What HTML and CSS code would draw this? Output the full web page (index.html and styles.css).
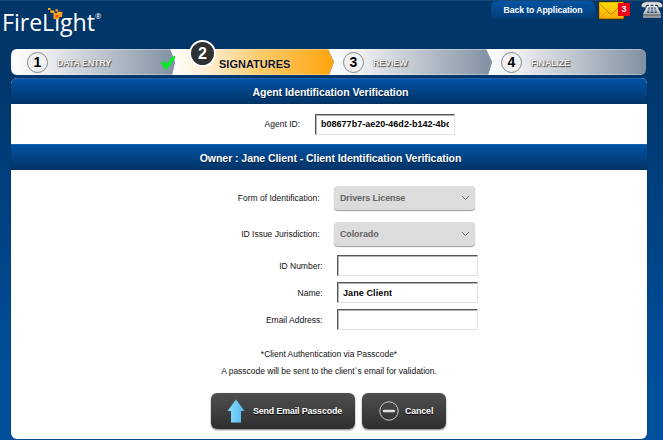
FILE: index.html
```html
<!DOCTYPE html>
<html lang="en">
<head>
<meta charset="utf-8">
<title>FireLight - Signatures</title>
<link rel="stylesheet" href="styles.css">
</head>
<body>
<header class="top">
  <div class="logo">
    <span class="logo-text">FireLight</span><span class="reg">®</span>
    <svg class="sparks" width="16" height="12" viewBox="0 0 16 12"><path fill="#f7a823" d="M1 0h2.500v2H1zM3 2.300l4.500.5v2.500l-4-.5zM8.500 1.200h2.300v2.300H8.500z"/><path fill="#f9a11f" d="M6.500 5h3.500l.5-1.500 5 .5-.5 5H12.500l-.5 2.500-5.500-.5z"/><path fill="#e84e1b" d="M8.500 7h3v2.500h-3z"/></svg>
  </div>
  <a class="back">Back to Application</a>
  <div class="mail">
    <svg width="28" height="21" viewBox="0 0 28 21"><defs><linearGradient id="g" x2="0" y2="1"><stop stop-color="#ffe000"/><stop offset="1" stop-color="#ffa90c"/></linearGradient></defs><rect x=".7" y=".7" width="25.500" height="17.500" rx="1" fill="url(#g)" stroke="#2b2410"/><path d="M2 3l9 9q2 2 4 0L24 3" fill="none" stroke="#c98500"/><path d="M2 16.500l7-6M17 10.500l7 6" stroke="#e79c00" stroke-width=".6"/></svg>
    <span class="badge">3</span>
  </div>
  <svg class="phone" width="22" height="18" viewBox="0 0 22 18"><defs><linearGradient id="p" x2="0" y2="1"><stop stop-color="#fff"/><stop offset="1" stop-color="#8b8f94"/></linearGradient></defs><path fill="#ddd" stroke="#555" stroke-width=".5" d="M.5 6Q0 1 6 .8h10Q22 1 21.500 6l-4 .5L16.500 4h-11L4.500 6.500z"/><path fill="url(#p)" d="M6 5h2V3h1.500v2h3V3H14v2h2l4 8v4H2v-4z"/><path fill="#244466" d="M7.500 6.500h7l1.500 5.500H6z"/><path stroke="#eee" stroke-width=".8" d="M9.500 6.500l-.6 5.500M12.500 6.500l.6 5.500M7 8.200h8M6.500 10h9"/><path stroke="#555" d="M2 14h18"/></svg>
</header>

<nav class="steps">
  <svg class="track" width="636" height="26" viewBox="0 0 636 26">
    <defs>
      <linearGradient id="s"><stop stop-color="#fdfdfe"/><stop offset=".2" stop-color="#edeff1"/><stop offset="1" stop-color="#8090a2"/></linearGradient>
      <linearGradient id="o"><stop stop-color="#fff"/><stop offset=".25" stop-color="#ffeccb"/><stop offset=".55" stop-color="#ffcb6b"/><stop offset="1" stop-color="#ffa40a"/></linearGradient>
    </defs>
    <path fill="url(#s)" d="M6 0h153l5 13-3 13H6Q0 26 0 19V7Q0 0 6 0z"/>
    <path fill="url(#o)" d="M159 0h158l6 13-5 13H161l3-13z"/>
    <path fill="url(#s)" d="M317 0h158l6 13-4 13H318l5-13z"/>
    <path fill="url(#s)" d="M475 0h154q6 0 6 6v14q0 6-6 6H477l4-13z"/>
    <path fill="none" stroke="#fff" stroke-opacity=".35" d="M5 .5h625M5 25.500h625"/>
  </svg>
  <div class="step first"><span class="num">1</span><span class="cap">DATA ENTRY</span>
    <svg class="check" width="16" height="15" viewBox="0 0 16 15"><path fill="#0bea28" d="M.5 7.500L4 6l2.500 3L12 2l3-1.500v3L7.500 14H5z"/></svg>
  </div>
  <div class="step active"><span class="num">2</span><span class="cap">SIGNATURES</span></div>
  <div class="step third"><span class="num">3</span><span class="cap">REVIEW</span></div>
  <div class="step fourth"><span class="num">4</span><span class="cap">FINALIZE</span></div>
</nav>

<main class="panel">
  <h2 class="bar"><span>Agent Identification Verification</span></h2>
  <div class="agent"><label class="agent-label">Agent ID:</label><div class="field"><span class="value agent-value">b08677b7-ae20-46d2-b142-4bd</span></div></div>
  <h2 class="bar"><span>Owner : Jane Client - Client Identification Verification</span></h2>
  <section class="form">
    <div class="row sel"><label>Form of Identification:</label><div class="select"><span>Drivers License</span><svg width="9" height="6" viewBox="0 0 9 6"><path d="M1 1l3.500 3.500L8 1" fill="none" stroke="#666"/></svg></div></div>
    <div class="row sel"><label>ID Issue Jurisdiction:</label><div class="select"><span>Colorado</span><svg width="9" height="6" viewBox="0 0 9 6"><path d="M1 1l3.500 3.500L8 1" fill="none" stroke="#666"/></svg></div></div>
    <div class="row"><label>ID Number:</label><div class="field"></div></div>
    <div class="row"><label>Name:</label><div class="field"><span class="value">Jane Client</span></div></div>
    <div class="row"><label>Email Address:</label><div class="field"></div></div>
  </section>
  <p class="note n1">*Client Authentication via Passcode*</p>
  <p class="note">A passcode will be sent to the client`s email for validation.</p>
  <div class="actions">
    <button class="btn send"><svg width="18" height="24" viewBox="0 0 18 24"><defs><linearGradient id="a"><stop stop-color="#8bdcff"/><stop offset="1" stop-color="#55b9ed"/></linearGradient></defs><path fill="url(#a)" d="M9 .5L17.500 12H14v11.500H4V12H.5z"/></svg><span>Send Email Passcode</span></button>
    <button class="btn cancel"><svg width="20" height="20" viewBox="0 0 20 20"><circle cx="10" cy="10" r="9.200" fill="none" stroke="#c9c9c9"/><path d="M5 10h10" stroke="#ddd" stroke-width="2.400" stroke-linecap="round"/></svg><span>Cancel</span></button>
  </div>
</main>
</body>
</html>
```
FILE: styles.css
```css
* { box-sizing: border-box; }
html { height: 100%; }
body {
  margin: 0;
  height: 440px;
  overflow: hidden;
  font-family: "Liberation Sans", Arial, sans-serif;
  font-size: 8.500px;
  color: #111;
  background: linear-gradient(#023568 0, #023568 50px, #003d79 160px, #004f9b 380px, #004f9c 440px);
}
.top { height: 49px; display: flex; align-items: flex-start; border-top: 1px solid #1a4877; }
.logo { position: relative; width: 491px; height: 48px; padding: 2px 0 0 2px; display: flex; color: #fff; }
.logo-text { font: 23.200px/38px "Open Sans", sans-serif; letter-spacing: -.05px; }
.reg { font: 7.500px/12px "Open Sans", sans-serif; margin-top: 7px; }
.sparks { position: absolute; left: 47px; top: 7px; }
.back {
  width: 104px; height: 18px; border-radius: 6px; text-align: center;
  font-weight: bold; font-size: 8.700px; letter-spacing: -.1px; line-height: 18px; color: #fff; white-space: nowrap;
  background: linear-gradient(#0354a3, #033d78); box-shadow: 0 0 1px #0a4f90;
}
.mail { position: relative; width: 42px; height: 20px; margin-left: 3px; }
.mail svg { display: block; }
.badge { position: absolute; left: 20px; top: 2px; width: 12px; height: 13px; background: #f10018; color: #fff; font-weight: bold; font-size: 9px; line-height: 13px; text-align: center; }
.phone { margin-left: 1px; }

.steps { position: relative; width: 636px; height: 26px; margin-left: 11px; display: flex; }
.track { position: absolute; left: 0; top: 0; }
.step { position: relative; width: 158px; height: 26px; display: flex; align-items: center; padding-left: 16px; }
.num {
  width: 21px; height: 21px; border: 1px solid #888; border-radius: 50%; background: #f1f1f2;
  font-weight: bold; font-size: 14px; line-height: 19px; text-align: center; color: #000;
}
.cap { margin-left: 9px; margin-top: 2px; font-size: 9px; font-weight: bold; letter-spacing: -.2px; color: #f5f5f5; text-shadow: 1px 1px 1px #4a4a4a, 0 0 1px #666; white-space: nowrap; }
.check { position: absolute; left: 149px; top: 6px; }
.active .num { position: absolute; left: 20px; top: -9px; width: 27px; height: 27px; border: 2px solid #fff; background: #2f3133; color: #fff; line-height: 23px; font-size: 16px; }
.active .cap { margin-left: 34px; margin-top: 3px; font-size: 11px; letter-spacing: 0; color: #111; text-shadow: 0 0 1px #fff; }

.panel { width: 636px; height: 361px; margin: 3px 0 0 11px; background: #fff; border-radius: 6px; overflow: hidden; box-shadow: 0 0 1px #011f42; }
.bar { margin: 0; height: 26px; padding-left: 3px; background: linear-gradient(#0353a4, #023366); color: #fff; font-size: 10.500px; letter-spacing: -.05px; line-height: 26px; text-align: center; text-shadow: 0 1px 1px #001a38; border-top: 1px solid #1862ac; white-space: nowrap; }
.agent { height: 40px; display: flex; align-items: center; }
.agent-label { width: 289px; text-align: right; }
.agent .field { margin-left: 15px; width: 140px; }
.field { width: 141px; height: 21px; border: 1px solid #e2e2e2; border-top-color: #555; border-left-color: #555; box-shadow: inset 1px 1px #b5b5b5; background: #fff; padding: 0 5px; overflow: hidden; display: flex; align-items: center; }
.value { font-weight: bold; font-size: 9px; letter-spacing: .1px; color: #000; white-space: nowrap; overflow: hidden; }
.agent-value { letter-spacing: .02px; }
.form { padding-top: 10px; }
.row { height: 27.200px; display: flex; align-items: center; }
.row label { width: 311.600px; text-align: right; white-space: nowrap; }
.row .field { margin-left: 14.400px; }
.row.sel { height: 36px; }
.row.sel label { width: 308.600px; padding-bottom: 1px; }
.select { width: 141px; height: 24px; margin-left: 14.400px; padding: 0 5px 0 6px; border-radius: 4px; background: #dcdcdc; box-shadow: 0 1px 1px #999; display: flex; align-items: center; justify-content: space-between; color: #626262; font-weight: bold; font-size: 9px; letter-spacing: -.12px; }
.note { margin: 0; width: 636px; text-align: center; line-height: 17px; letter-spacing: -.02px; }
.n1 { margin-top: 12px; }
.actions { display: flex; gap: 7px; margin: 13px 0 0 200px; }
.btn { height: 36px; border: 0; border-radius: 6px; padding: 0; background: linear-gradient(#4f4f4f, #2e2e2e); box-shadow: 0 1px 2px #777; color: #fff; font: bold 8.800px "Liberation Sans", Arial, sans-serif; letter-spacing: -.1px; display: flex; align-items: center; text-shadow: 0 1px 1px #000; white-space: nowrap; }
.send { width: 144px; padding-left: 16px; gap: 8px; }
.cancel { width: 84px; padding-left: 17px; gap: 6px; }
```
